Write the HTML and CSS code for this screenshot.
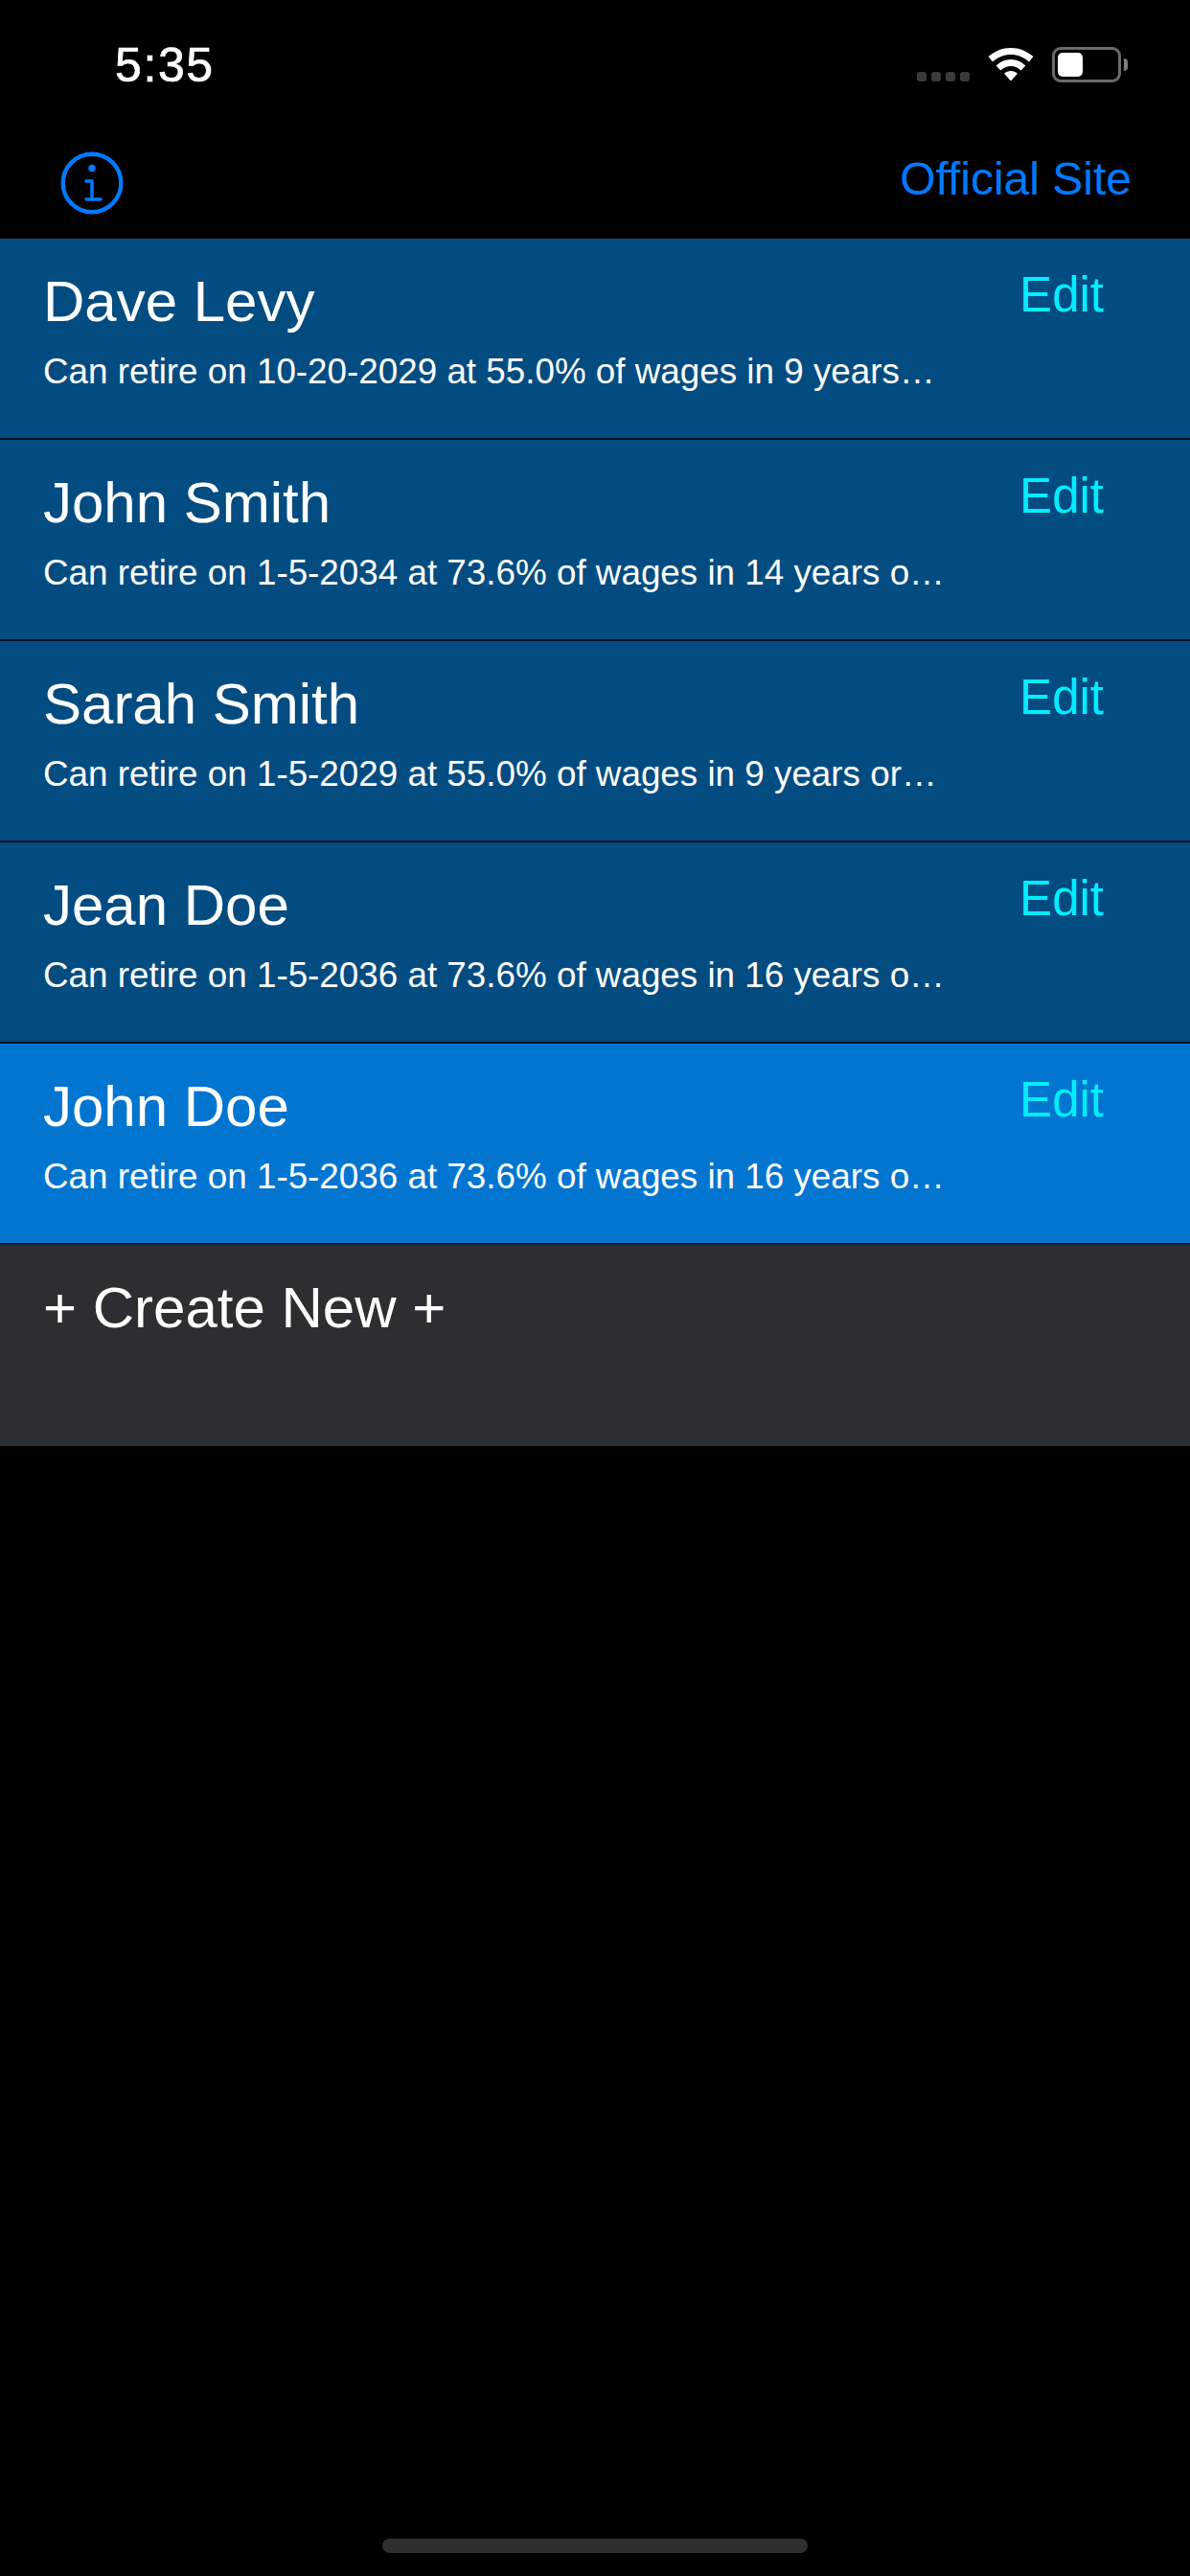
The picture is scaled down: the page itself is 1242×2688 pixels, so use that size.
FILE: index.html
```html
<!DOCTYPE html>
<html lang="en">
<head>
<meta charset="utf-8">
<title>Retirement profiles</title>
<link rel="stylesheet" href="styles.css">
</head>
<body>
<div class="app">
  <header class="status">
    <span class="time">5:35</span>
    <div class="status-icons">
      <div class="signal"><i></i><i></i><i></i><i></i></div>
      <svg class="wifi" width="48" height="36" viewBox="0 0 48 36"><path fill="#fff" d="M24 1C15 1 7.500 4.300 .5 10L5 15.500C10.500 10.500 17 8 24 8S37.500 10.500 43 15.500L47.500 10C40.500 4.300 33 1 24 1Z"/><path fill="#fff" d="M24 13C18.500 13 13.500 15 8.700 19.500L13.300 24.500C16.200 21.800 19.900 20 24 20S31.800 21.800 34.700 24.500L39.300 19.500C34.500 15 29.500 13 24 13Z"/><path fill="#fff" d="M24 25C21.500 25 19.200 26 17 27.800L24 35.500L31 27.800C28.800 26 26.500 25 24 25Z"/></svg>
      <div class="battery"><div class="battery-body"><div class="battery-fill"></div></div><div class="battery-cap"></div></div>
    </div>
  </header>
  <nav class="nav">
    <svg class="info" width="66" height="66" viewBox="0 0 66 66"><circle cx="33" cy="33" r="30.300" fill="none" stroke="#007aff" stroke-width="4.400"/><circle cx="33" cy="17.500" r="3.700" fill="#007aff"/><path d="M27 31H33V50M27 50H42" fill="none" stroke="#007aff" stroke-width="3.400" stroke-linecap="round" stroke-linejoin="round"/></svg>
    <a class="site">Official Site</a>
  </nav>
  <main class="list">
    <section class="row">
      <div class="row-text"><h2 class="name">Dave Levy</h2><p class="detail">Can retire on 10-20-2029 at 55.0% of wages in 9 years…</p></div>
      <a class="edit">Edit</a>
    </section>
    <section class="row">
      <div class="row-text"><h2 class="name">John Smith</h2><p class="detail">Can retire on 1-5-2034 at 73.6% of wages in 14 years o…</p></div>
      <a class="edit">Edit</a>
    </section>
    <section class="row">
      <div class="row-text"><h2 class="name">Sarah Smith</h2><p class="detail">Can retire on 1-5-2029 at 55.0% of wages in 9 years or…</p></div>
      <a class="edit">Edit</a>
    </section>
    <section class="row">
      <div class="row-text"><h2 class="name">Jean Doe</h2><p class="detail">Can retire on 1-5-2036 at 73.6% of wages in 16 years o…</p></div>
      <a class="edit">Edit</a>
    </section>
    <section class="row row-active">
      <div class="row-text"><h2 class="name">John Doe</h2><p class="detail">Can retire on 1-5-2036 at 73.6% of wages in 16 years o…</p></div>
      <a class="edit">Edit</a>
    </section>
    <section class="row row-create">
      <div class="row-text"><h2 class="name">+ Create New +</h2></div>
    </section>
  </main>
  <div class="spacer"></div>
  <div class="home-wrap"><div class="home"></div></div>
</div>
</body>
</html>
```
FILE: styles.css
```css
* { box-sizing: border-box; margin: 0; padding: 0; }
html, body { background: #000; }
body { width: 1242px; height: 2688px; overflow: hidden; font-family: "Liberation Sans", Arial, sans-serif; color: #fff; }
.app { display: flex; flex-direction: column; height: 2688px; }

.status { height: 90px; display: flex; justify-content: space-between; align-items: flex-start; padding: 42px 65px 0 120px; }
.time { font-size: 50px; line-height: 52px; letter-spacing: 1.6px; -webkit-text-stroke: 0.7px #fff; }
.status-icons { display: flex; align-items: flex-start; padding-top: 7px; }
.signal { display: flex; gap: 5px; margin-top: 26px; margin-right: 19px; }
.signal i { width: 10px; height: 10px; border-radius: 3px; background: #3a3a3a; }
.wifi { display: block; margin-right: 19px; }
.battery { display: flex; align-items: center; }
.battery-body { width: 72px; height: 37px; border: 3px solid #6a6a6a; border-radius: 9px; padding: 3px; }
.battery-fill { width: 26px; height: 100%; background: #fff; border-radius: 5px; }
.battery-cap { width: 4px; height: 13px; background: #808080; border-radius: 0 4px 4px 0; margin-left: 3px; }

.nav { height: 159px; display: flex; justify-content: space-between; align-items: flex-start; padding: 0 61px 0 63px; }
.info { display: block; margin-top: 68px; }
.site { font-size: 48px; line-height: 54px; color: #007aff; margin-top: 70px; }

.list { display: flex; flex-direction: column; }
.row { height: 210px; display: flex; justify-content: space-between; align-items: flex-start; background: #034c81; border-bottom: 2px solid #01121f; padding: 0 90px 0 45px; }
.row-active { background: #0275d0; }
.row-create { background: #2b2f33; border-bottom: 0; }
.row-text { display: flex; flex-direction: column; }
.name { font-size: 60px; line-height: 68px; font-weight: 400; margin-top: 32px; }
.detail { font-size: 36.800px; line-height: 44px; margin-top: 17px; white-space: nowrap; }
.edit { font-size: 51px; line-height: 58px; color: #00eeff; margin-top: 30px; }

.spacer { flex: 1; }
.home-wrap { display: flex; justify-content: center; padding-bottom: 24px; }
.home { width: 444px; height: 15px; background: #2f2f2f; border-radius: 8px; }
```
